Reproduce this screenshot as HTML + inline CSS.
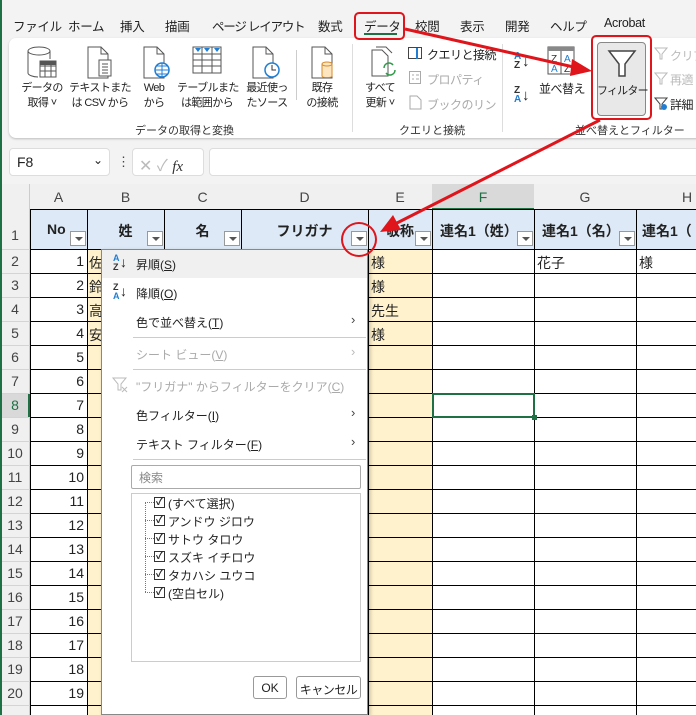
<!DOCTYPE html>
<html style="overflow:hidden"><head><meta charset="utf-8">
<style>
*{margin:0;padding:0;box-sizing:border-box}
html,body{width:696px;height:715px;overflow:hidden}
body{position:relative;background:#f3f3f3;font-family:"Liberation Sans","Noto Sans CJK JP",sans-serif;color:#222}
.a{position:absolute;white-space:nowrap}
.tab{position:absolute;top:16px;font-size:12.5px;color:#222;letter-spacing:-0.3px}
.rl{font-size:11px;text-align:center;line-height:15px;color:#222;letter-spacing:-0.6px}
.gl{font-size:11px;color:#333}
.ic{position:absolute}
.cell{position:absolute;font-size:14px}
.rh{position:absolute;left:0;width:30px;text-align:center;font-size:14px;color:#444}
.num{position:absolute;left:30px;width:54px;text-align:right;font-size:14px}
.hd{position:absolute;top:210px;height:39px;background:#dde9f6;font-weight:bold;font-size:14px;text-align:center;padding-top:11px}
.dd{position:absolute;width:16px;height:15px;background:#fff;border:1px solid #999}
.dd:after{content:"";position:absolute;left:4px;top:5px;border-left:4px solid transparent;border-right:4px solid transparent;border-top:4px solid #555}
.mi{position:absolute;left:136px;font-size:12px;color:#222}
.ar{position:absolute;left:351px;font-size:13px;color:#444}
.chk{position:absolute;left:154px;width:11px;height:11px;border:1px solid #333;background:#fff;font-size:10px;line-height:9px;text-align:center;font-weight:bold}
.ci{position:absolute;left:168px;font-size:12px}
.sm{font-size:12px;letter-spacing:-0.5px}
</style></head><body>
<div class="a" style="left:0;top:0;width:2px;height:715px;background:#1e7145"></div>
<!-- tabs -->
<div class="tab" style="left:13px">ファイル</div>
<div class="tab" style="left:68px">ホーム</div>
<div class="tab" style="left:120px">挿入</div>
<div class="tab" style="left:165px">描画</div>
<div class="tab" style="left:212px;letter-spacing:-1.2px">ページ レイアウト</div>
<div class="tab" style="left:318px">数式</div>
<div class="tab" style="left:364px">データ</div>
<div class="a" style="left:364px;top:33px;width:33px;height:2px;background:#1e7145"></div>
<div class="tab" style="left:415px">校閲</div>
<div class="tab" style="left:460px">表示</div>
<div class="tab" style="left:505px">開発</div>
<div class="tab" style="left:550px">ヘルプ</div>
<div class="tab" style="left:604px">Acrobat</div>
<!-- ribbon card -->
<div class="a" style="left:9px;top:38px;width:700px;height:100px;background:#fff;border-radius:7px;box-shadow:0 1px 2px #bbb"></div>
<svg class="ic" style="left:26px;top:45px" width="32" height="34"><ellipse cx="13" cy="6" rx="11" ry="4" fill="#fff" stroke="#555"/><path d="M2 6v22c0 2 5 4 10 4M24 6v8" fill="none" stroke="#555"/><rect x="14" y="16" width="16" height="16" fill="#fff" stroke="#555"/><path d="M14 21h16M14 26h16M19 16v16M25 16v16" stroke="#555"/><rect x="14" y="16" width="16" height="4" fill="#555"/></svg>
<svg class="ic" style="left:86px;top:46px" width="30" height="34"><path d="M2 1h13l7 7v24H2z" fill="#fff" stroke="#555"/><path d="M15 1v7h7" fill="none" stroke="#555"/><rect x="13" y="14" width="12" height="16" fill="#fff" stroke="#555"/><path d="M16 18h6M16 21h6M16 24h6M16 27h6" stroke="#555"/></svg>
<svg class="ic" style="left:142px;top:46px" width="30" height="34"><path d="M2 1h13l7 7v24H2z" fill="#fff" stroke="#555"/><path d="M15 1v7h7" fill="none" stroke="#555"/><circle cx="20" cy="24" r="7" fill="#fff" stroke="#1f7ed3" stroke-width="1.5"/><path d="M13 24h14M20 17v14M15 20h10M15 28h10" stroke="#1f7ed3"/></svg>
<svg class="ic" style="left:192px;top:46px" width="32" height="30"><rect x="1" y="1" width="28" height="26" fill="#fff" stroke="#555"/><path d="M1 8h28M1 14h28M1 20h28M10 1v26M20 1v26" stroke="#555"/><path d="M3 2l3 4 3-4zM12 2l3 4 3-4zM22 2l3 4 3-4z" fill="#1f7ed3"/></svg>
<svg class="ic" style="left:251px;top:46px" width="32" height="34"><path d="M2 1h13l7 7v24H2z" fill="#fff" stroke="#555"/><path d="M15 1v7h7" fill="none" stroke="#555"/><circle cx="21" cy="24" r="7" fill="#fff" stroke="#1f7ed3" stroke-width="1.5"/><path d="M21 19v5h4" fill="none" stroke="#333"/></svg>
<div class="a" style="left:296px;top:50px;width:1px;height:50px;background:#ccc"></div>
<svg class="ic" style="left:310px;top:46px" width="32" height="34"><path d="M2 1h13l7 7v24H2z" fill="#fff" stroke="#555"/><path d="M15 1v7h7" fill="none" stroke="#555"/><path d="M12 18v12c0 2 10 2 10 0V18" fill="#fde5c0" stroke="#d88a2a"/><ellipse cx="17" cy="18" rx="5" ry="2" fill="#fde5c0" stroke="#d88a2a"/></svg>
<div class="a rl" style="left:16px;top:81px;width:52px">データの<br>取得 ˅</div>
<div class="a rl" style="left:68px;top:81px;width:64px">テキストまた<br>は CSV から</div>
<div class="a rl" style="left:136px;top:81px;width:36px">Web<br>から</div>
<div class="a rl" style="left:177px;top:81px;width:60px">テーブルまた<br>は範囲から</div>
<div class="a rl" style="left:242px;top:81px;width:50px">最近使っ<br>たソース</div>
<div class="a rl" style="left:302px;top:81px;width:40px">既存<br>の接続</div>
<div class="a gl" style="left:135px;top:122px">データの取得と変換</div>
<div class="a" style="left:352px;top:44px;width:1px;height:88px;background:#ddd"></div>
<svg class="ic" style="left:370px;top:46px" width="30" height="34"><path d="M2 4h10l6 6v20H2z" fill="#fff" stroke="#555"/><path d="M6 1h10l6 6" fill="none" stroke="#555"/><path d="M14 22a5 5 0 0 1 9-3M25 24a5 5 0 0 1-9 3" fill="none" stroke="#2e9a47" stroke-width="1.5"/></svg>
<div class="a rl" style="left:360px;top:81px;width:40px">すべて<br>更新 ˅</div>
<svg class="ic" style="left:408px;top:47px" width="14" height="13"><rect x="0.5" y="0.5" width="13" height="11" fill="#fff" stroke="#444"/><path d="M9 1v11" stroke="#1f7ed3" stroke-width="2"/></svg>
<div class="a sm" style="left:427px;top:46px">クエリと接続</div>
<svg class="ic" style="left:409px;top:71px" width="13" height="14"><rect x="0.5" y="0.5" width="11" height="12" fill="#fff" stroke="#aaa"/><path d="M3 4h2M7 4h3M3 8h2M7 8h3" stroke="#aaa"/></svg>
<div class="a sm" style="left:427px;top:71px;color:#aaa">プロパティ</div>
<svg class="ic" style="left:409px;top:95px" width="14" height="15"><path d="M1 1h7l4 4v9H1z" fill="#fff" stroke="#aaa"/></svg>
<div class="a sm" style="left:427px;top:96px;color:#aaa;width:70px;overflow:hidden">ブックのリンク</div>
<div class="a gl" style="left:399px;top:122px">クエリと接続</div>
<div class="a" style="left:502px;top:44px;width:1px;height:88px;background:#ddd"></div>
<div class="a" style="left:514px;top:52px;font-size:10px;line-height:9px;font-weight:bold;color:#1f7ed3">A<br><span style="color:#333">Z</span></div><div class="a" style="left:522px;top:53px;font-size:15px">↓</div>
<div class="a" style="left:514px;top:86px;font-size:10px;line-height:9px;font-weight:bold;color:#333">Z<br><span style="color:#1f7ed3">A</span></div><div class="a" style="left:522px;top:87px;font-size:15px">↓</div>
<svg class="ic" style="left:547px;top:46px" width="28" height="30"><rect x="1" y="1" width="26" height="27" fill="#fff" stroke="#555"/><rect x="1" y="1" width="26" height="4" fill="#888"/><path d="M14 5v23" stroke="#555"/><text x="4" y="16" font-size="10" font-family="Liberation Sans" fill="#333">Z</text><text x="4" y="26" font-size="10" font-family="Liberation Sans" fill="#1f7ed3">A</text><text x="17" y="16" font-size="10" font-family="Liberation Sans" fill="#1f7ed3">A</text><text x="17" y="26" font-size="10" font-family="Liberation Sans" fill="#333">Z</text></svg>
<div class="a sm" style="left:539px;top:80px">並べ替え</div>
<div class="a" style="left:597px;top:42px;width:49px;height:74px;background:#e8e8e8;border:1px solid #888;border-radius:4px"></div>
<svg class="ic" style="left:607px;top:49px" width="30" height="30"><path d="M2 2h26L18 15v12h-6V15z" fill="#fff" stroke="#444" stroke-width="1.5"/></svg>
<div class="a" style="left:597px;top:82px;width:49px;text-align:center;font-size:11px;letter-spacing:-0.8px">フィルター</div>
<svg class="ic" style="left:654px;top:47px" width="14" height="14"><path d="M1 1h12L8 7v5H6V7z" fill="none" stroke="#bbb"/></svg>
<div class="a sm" style="left:670px;top:47px;color:#bbb">クリア</div>
<svg class="ic" style="left:654px;top:72px" width="14" height="14"><path d="M1 1h12L8 7v5H6V7z" fill="none" stroke="#bbb"/></svg>
<div class="a sm" style="left:670px;top:71px;color:#bbb">再適</div>
<svg class="ic" style="left:654px;top:97px" width="14" height="14"><path d="M1 1h12L8 7v5H6V7z" fill="none" stroke="#444"/><circle cx="10" cy="10" r="3" fill="#1f7ed3"/></svg>
<div class="a sm" style="left:670px;top:96px">詳細</div>
<div class="a gl" style="left:575px;top:122px">並べ替えとフィルター</div>
<!-- formula bar -->
<div class="a" style="left:9px;top:148px;width:101px;height:28px;background:#fff;border:1px solid #ddd;border-radius:4px;font-size:14px;padding:5px 0 0 7px">F8<span style="position:absolute;right:6px;top:4px;font-size:12px">⌄</span></div>
<div class="a" style="left:117px;top:154px;font-size:13px;color:#444">⋮</div>
<div class="a" style="left:132px;top:148px;width:72px;height:28px;background:#fff;border:1px solid #ddd;border-radius:4px;font-size:16px;padding:3px 0 0 6px;color:#bbb">✕ ✓ <i style="font-family:'Liberation Serif',serif;color:#333;font-size:15px">fx</i></div>
<div class="a" style="left:209px;top:148px;width:500px;height:28px;background:#fff;border:1px solid #ddd;border-radius:4px"></div>
<!-- sheet -->
<div class="a" style="left:2px;top:184px;width:694px;height:531px;background:#fff"></div>
<div class="a" style="left:2px;top:184px;width:694px;height:26px;background:#f0f0f0;border-bottom:1px solid #ccc"></div>
<div class="a" style="left:2px;top:184px;width:28px;height:531px;background:#f0f0f0;border-right:1px solid #ccc"></div>
<div class="a" style="left:432px;top:184px;width:102px;height:26px;background:#d9d9d9;border-bottom:2px solid #1e7145"></div>
<div class="a" style="left:2px;top:393px;width:28px;height:24px;background:#d9d9d9;border-right:2px solid #1e7145"></div>
<div class="a" style="left:30px;top:189px;width:57px;text-align:center;font-size:14px;color:#444">A</div>
<div class="a" style="left:87px;top:189px;width:77px;text-align:center;font-size:14px;color:#444">B</div>
<div class="a" style="left:164px;top:189px;width:77px;text-align:center;font-size:14px;color:#444">C</div>
<div class="a" style="left:241px;top:189px;width:127px;text-align:center;font-size:14px;color:#444">D</div>
<div class="a" style="left:368px;top:189px;width:64px;text-align:center;font-size:14px;color:#444">E</div>
<div class="a" style="left:432px;top:189px;width:102px;text-align:center;font-size:14px;color:#1e7145">F</div>
<div class="a" style="left:534px;top:189px;width:102px;text-align:center;font-size:14px;color:#444">G</div>
<div class="a" style="left:636px;top:189px;width:102px;text-align:center;font-size:14px;color:#444">H</div>
<div class="hd" style="left:30px;width:57px;text-align:left;padding-left:17px">No</div>
<div class="hd" style="left:87px;width:77px">姓</div>
<div class="hd" style="left:164px;width:77px">名</div>
<div class="hd" style="left:241px;width:127px">フリガナ</div>
<div class="hd" style="left:368px;width:64px">敬称</div>
<div class="hd" style="left:432px;width:102px;text-align:left;padding-left:8px">連名1（姓）</div>
<div class="hd" style="left:534px;width:102px;text-align:left;padding-left:8px">連名1（名）</div>
<div class="hd" style="left:636px;width:102px;text-align:left;padding-left:6px">連名1（</div>
<div class="dd" style="left:70px;top:231px"></div><div class="dd" style="left:147px;top:231px"></div><div class="dd" style="left:224px;top:231px"></div><div class="dd" style="left:351px;top:231px"></div><div class="dd" style="left:415px;top:231px"></div><div class="dd" style="left:517px;top:231px"></div><div class="dd" style="left:619px;top:231px"></div>
<div class="a" style="left:87px;top:249px;width:77px;height:466px;background:#fff2cc"></div>
<div class="a" style="left:368px;top:249px;width:64px;height:466px;background:#fff2cc"></div>
<div class="a" style="left:30px;top:249px;width:666px;height:466px;background:repeating-linear-gradient(to bottom,#000 0,#000 1px,transparent 1px,transparent 24px)"></div>
<div class="a" style="left:2px;top:249px;width:28px;height:466px;background:repeating-linear-gradient(to bottom,#d4d4d4 0,#d4d4d4 1px,transparent 1px,transparent 24px)"></div>
<div class="a" style="left:30px;top:209px;width:666px;height:1px;background:#000"></div>
<div class="a" style="left:30px;top:210px;width:1px;height:505px;background:#000"></div>
<div class="a" style="left:87px;top:210px;width:1px;height:505px;background:#000"></div>
<div class="a" style="left:164px;top:210px;width:1px;height:505px;background:#000"></div>
<div class="a" style="left:241px;top:210px;width:1px;height:505px;background:#000"></div>
<div class="a" style="left:368px;top:210px;width:1px;height:505px;background:#000"></div>
<div class="a" style="left:432px;top:210px;width:1px;height:505px;background:#000"></div>
<div class="a" style="left:534px;top:210px;width:1px;height:505px;background:#000"></div>
<div class="a" style="left:636px;top:210px;width:1px;height:505px;background:#000"></div>
<div class="a" style="left:432px;top:393px;width:103px;height:25px;border:2px solid #1e7145"></div>
<div class="a" style="left:532px;top:415px;width:5px;height:5px;background:#1e7145"></div>
<div class="rh" style="top:227px">1</div>
<div class="rh" style="top:253px">2</div><div class="rh" style="top:277px">3</div><div class="rh" style="top:301px">4</div><div class="rh" style="top:325px">5</div><div class="rh" style="top:349px">6</div><div class="rh" style="top:373px">7</div><div class="rh" style="top:397px;color:#1e7145">8</div><div class="rh" style="top:421px">9</div><div class="rh" style="top:445px">10</div><div class="rh" style="top:469px">11</div><div class="rh" style="top:493px">12</div><div class="rh" style="top:517px">13</div><div class="rh" style="top:541px">14</div><div class="rh" style="top:565px">15</div><div class="rh" style="top:589px">16</div><div class="rh" style="top:613px">17</div><div class="rh" style="top:637px">18</div><div class="rh" style="top:661px">19</div><div class="rh" style="top:685px">20</div>
<div class="num" style="top:253px">1</div><div class="num" style="top:277px">2</div><div class="num" style="top:301px">3</div><div class="num" style="top:325px">4</div><div class="num" style="top:349px">5</div><div class="num" style="top:373px">6</div><div class="num" style="top:397px">7</div><div class="num" style="top:421px">8</div><div class="num" style="top:445px">9</div><div class="num" style="top:469px">10</div><div class="num" style="top:493px">11</div><div class="num" style="top:517px">12</div><div class="num" style="top:541px">13</div><div class="num" style="top:565px">14</div><div class="num" style="top:589px">15</div><div class="num" style="top:613px">16</div><div class="num" style="top:637px">17</div><div class="num" style="top:661px">18</div><div class="num" style="top:685px">19</div>
<div class="cell" style="left:89px;top:253px">佐</div><div class="cell" style="left:89px;top:277px">鈴</div><div class="cell" style="left:89px;top:301px">高</div><div class="cell" style="left:89px;top:325px">安</div>
<div class="cell" style="left:371px;top:253px">様</div><div class="cell" style="left:371px;top:277px">様</div><div class="cell" style="left:371px;top:301px">先生</div><div class="cell" style="left:371px;top:325px">様</div>
<div class="cell" style="left:537px;top:253px">花子</div><div class="cell" style="left:639px;top:253px">様</div>
<!-- dropdown menu -->
<div class="a" style="left:101px;top:249px;width:267px;height:466px;background:#fff;border:1px solid #888;box-shadow:2px 2px 4px rgba(0,0,0,.25)"></div>
<div class="a" style="left:102px;top:250px;width:265px;height:28px;background:#f0f0f0"></div>
<div class="a" style="left:113px;top:254px;font-size:9px;line-height:9px;font-weight:bold;color:#1f7ed3">A<br><span style="color:#333">Z</span></div><div class="a" style="left:120px;top:254px;font-size:14px">↓</div>
<div class="mi" style="top:256px">昇順(<u>S</u>)</div>
<div class="a" style="left:113px;top:283px;font-size:9px;line-height:9px;font-weight:bold;color:#333">Z<br><span style="color:#1f7ed3">A</span></div><div class="a" style="left:120px;top:283px;font-size:14px">↓</div>
<div class="mi" style="top:285px">降順(<u>O</u>)</div>
<div class="mi" style="top:314px">色で並べ替え(<u>T</u>)</div><div class="ar" style="top:312px">›</div>
<div class="a" style="left:133px;top:337px;width:233px;height:1px;background:#ccc"></div>
<div class="mi" style="top:346px;color:#aaa">シート ビュー(<u>V</u>)</div><div class="ar" style="top:344px;color:#bbb">›</div>
<div class="a" style="left:133px;top:369px;width:233px;height:1px;background:#ccc"></div>
<svg class="ic" style="left:112px;top:377px" width="16" height="16"><path d="M1 1h13L9 7v6H6V7z" fill="none" stroke="#bbb"/><path d="M10 10l5 5M15 10l-5 5" stroke="#bbb"/></svg>
<div class="mi" style="top:378px;color:#aaa">"フリガナ" からフィルターをクリア(<u>C</u>)</div>
<div class="mi" style="top:407px">色フィルター(<u>I</u>)</div><div class="ar" style="top:405px">›</div>
<div class="mi" style="top:436px">テキスト フィルター(<u>F</u>)</div><div class="ar" style="top:434px">›</div>
<div class="a" style="left:133px;top:459px;width:233px;height:1px;background:#ccc"></div>
<div class="a" style="left:131px;top:465px;width:230px;height:24px;border:1px solid #aaa;border-radius:2px;font-size:12px;color:#888;padding:3px 0 0 7px">検索</div>
<div class="a" style="left:131px;top:493px;width:230px;height:169px;border:1px solid #ccc"></div>
<div class="a" style="left:145px;top:502px;width:1px;height:90px;border-left:1px dotted #777"></div>
<div class="a" style="left:145px;top:502px;width:9px;border-top:1px dotted #777"></div><div class="a" style="left:145px;top:520px;width:9px;border-top:1px dotted #777"></div><div class="a" style="left:145px;top:538px;width:9px;border-top:1px dotted #777"></div><div class="a" style="left:145px;top:556px;width:9px;border-top:1px dotted #777"></div><div class="a" style="left:145px;top:574px;width:9px;border-top:1px dotted #777"></div><div class="a" style="left:145px;top:592px;width:9px;border-top:1px dotted #777"></div>
<div class="chk" style="top:497px">✓</div><div class="ci" style="top:495px">(すべて選択)</div>
<div class="chk" style="top:515px">✓</div><div class="ci" style="top:513px">アンドウ ジロウ</div>
<div class="chk" style="top:533px">✓</div><div class="ci" style="top:531px">サトウ タロウ</div>
<div class="chk" style="top:551px">✓</div><div class="ci" style="top:549px">スズキ イチロウ</div>
<div class="chk" style="top:569px">✓</div><div class="ci" style="top:567px">タカハシ ユウコ</div>
<div class="chk" style="top:587px">✓</div><div class="ci" style="top:585px">(空白セル)</div>
<div class="a" style="left:253px;top:676px;width:34px;height:23px;border:1px solid #999;border-radius:3px;font-size:12px;text-align:center;padding-top:4px">OK</div>
<div class="a" style="left:296px;top:676px;width:65px;height:23px;border:1px solid #999;border-radius:3px;font-size:12px;text-align:center;padding-top:4px;letter-spacing:-0.5px">キャンセル</div>
<!-- annotations -->
<div class="a" style="left:354px;top:12px;width:51px;height:28px;border:2px solid #e0151b;border-radius:5px"></div>
<div class="a" style="left:591px;top:35px;width:61px;height:85px;border:2px solid #e0151b;border-radius:5px"></div>
<div class="a" style="left:341px;top:222px;width:36px;height:35px;border:2px solid #e0151b;border-radius:50%"></div>
<svg class="ic" style="left:0;top:0" width="696" height="715"><path d="M405 29L578 68" stroke="#e0151b" stroke-width="3"/><path d="M592 71L572 59L570 76z" fill="#e0151b"/><path d="M600 120L393 225" stroke="#e0151b" stroke-width="3"/><path d="M380 232L393 215L401 230z" fill="#e0151b"/></svg>
</body></html>
